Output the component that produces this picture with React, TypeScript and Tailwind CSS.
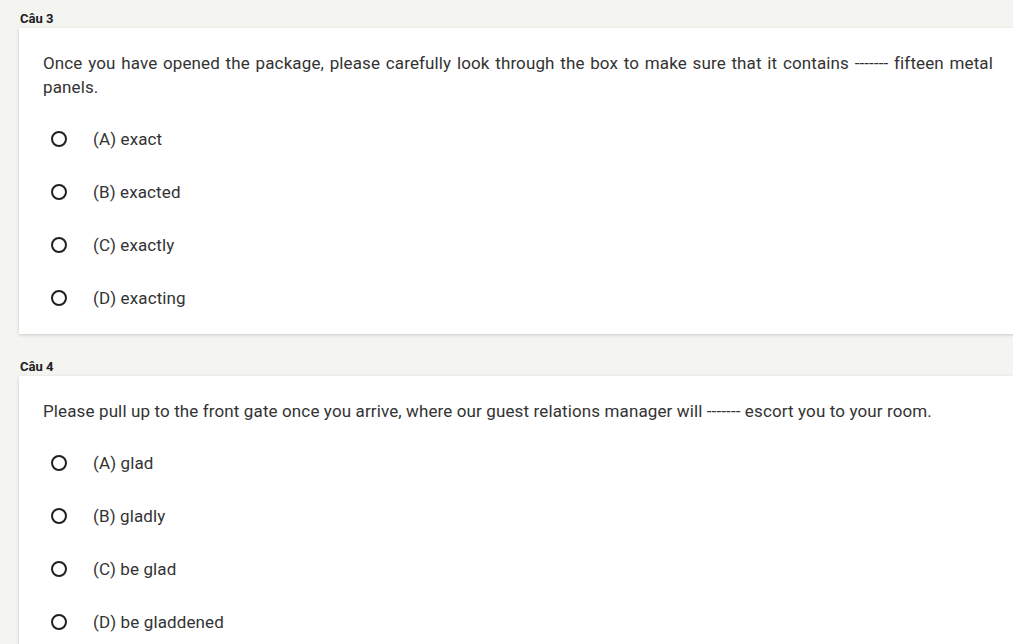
const questions = [
  {
    label: "Câu 3",
    text: "Once you have opened the package, please carefully look through the box to make sure that it contains ------- fifteen metal panels.",
    options: ["(A) exact", "(B) exacted", "(C) exactly", "(D) exacting"],
  },
  {
    label: "Câu 4",
    text: "Please pull up to the front gate once you arrive, where our guest relations manager will ------- escort you to your room.",
    options: ["(A) glad", "(B) gladly", "(C) be glad", "(D) be gladdened"],
  },
];

const Radio = () => (
  <span className="block w-[16px] h-[16px] rounded-full border-2 border-[#202020] shrink-0" />
);

export default function App() {
  return (
    <div
      className="h-screen w-[1013px] overflow-hidden bg-[#f4f4f1] pl-[19px] pt-[10px]"
      style={{ fontFamily: "Roboto, 'Liberation Sans', sans-serif" }}
    >
      {questions.map((q) => (
        <div key={q.label} className="mb-[24px]">
          <div className="text-[13px] font-bold text-[#202020] leading-[17px] h-[18px] pl-[1px]">
            {q.label}
          </div>
          <div className="w-[1010px] bg-white shadow-[0_1px_3px_rgba(0,0,0,0.18)] pl-[24px] pr-[36px] pt-[23px] pb-[24px]">
            <p className="text-[17px] tracking-[0.12px] leading-[24px] text-[#333333] w-[950px] text-justify">{q.text}</p>
            <div className="mt-[28px] flex flex-col gap-[29px] pl-[8px]">
              {q.options.map((o) => (
                <div key={o} className="flex items-center h-[24px]">
                  <Radio />
                  <span className="ml-[26px] text-[17px] tracking-[0.12px] text-[#333333] leading-[24px]">{o}</span>
                </div>
              ))}
            </div>
          </div>
        </div>
      ))}
    </div>
  );
}
